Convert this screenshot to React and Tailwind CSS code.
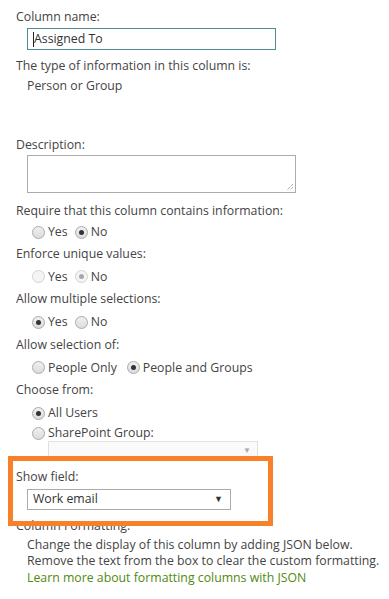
import React from 'react';

const Radio = ({ checked, disabled, label }) => (
  <span className="inline-flex items-center mr-[7px]">
    <span
      className={`w-[13px] h-[13px] rounded-full border flex items-center justify-center mr-[3px] ${
        disabled ? 'border-[#d4d4d4] bg-[#f4f4f4]' : 'border-[#a9a9a9] bg-gradient-to-b from-[#f0f0f0] to-[#dcdcdc]'
      }`}
    >
      {checked && (
        <span className={`w-[5px] h-[5px] rounded-full ${disabled ? 'bg-[#a8a8a8]' : 'bg-[#333]'}`} />
      )}
    </span>
    <span>{label}</span>
  </span>
);

// height passed in full so tailwind sees the class name
const Label = ({ children, h = 'h-[22.5px]', className = '' }) => (
  <div className={`${h} flex items-center whitespace-nowrap ${className}`}>{children}</div>
);

const RadioRow = ({ children, h = 'h-[22.5px]' }) => (
  <div className={`ml-[16px] ${h} flex items-center whitespace-nowrap`}>{children}</div>
);

const App = () => {
  return (
    <div
      className="w-[389px] h-[599px] bg-white text-[#444] text-[12.3px] overflow-hidden"
      style={{ fontFamily: '"Open Sans", "Noto Sans", sans-serif' }}
    >
      <div className="pl-[16px] pt-[6px]">
        <Label h="h-[22px]">Column name:</Label>
        <div className="ml-[11px] w-[249px] h-[22px] border border-[#4f8b93] flex items-center pl-[5px]">
          <span className="w-px h-[15px] bg-[#222]" />
          <span className="text-[#333]">Assigned To</span>
        </div>
        <Label h="h-[20px]" className="mt-[6px]">The type of information in this column is:</Label>
        <Label h="h-[20px]" className="ml-[11px]">Person or Group</Label>

        <Label h="h-[20px]" className="mt-[39px]">Description:</Label>
        <div className="relative ml-[11px] w-[269px] h-[38px] border border-[#ababab]">
          <svg className="absolute right-[1px] bottom-[1px]" width="9" height="9" viewBox="0 0 9 9">
            <path d="M8 2 L2 8 M8 5 L5 8" stroke="#888" strokeWidth="1" strokeDasharray="1 1" fill="none" />
          </svg>
        </div>

        <Label h="h-[22px]" className="mt-[7px]">Require that this column contains information:</Label>
        <RadioRow h="h-[21px]">
          <Radio label="Yes" />
          <Radio checked label="No" />
        </RadioRow>

        <Label>Enforce unique values:</Label>
        <RadioRow>
          <Radio disabled label="Yes" />
          <Radio disabled checked label="No" />
        </RadioRow>

        <Label h="h-[23px]">Allow multiple selections:</Label>
        <RadioRow>
          <Radio checked label="Yes" />
          <Radio label="No" />
        </RadioRow>

        <Label h="h-[23px]">Allow selection of:</Label>
        <RadioRow>
          <Radio label="People Only" />
          <span className="ml-[3px]" />
          <Radio checked label="People and Groups" />
        </RadioRow>

        <Label h="h-[23px]">Choose from:</Label>
        <RadioRow>
          <Radio checked label="All Users" />
        </RadioRow>
        <RadioRow h="h-[18px]">
          <Radio label="SharePoint Group:" />
        </RadioRow>
        <div className="ml-[32px] w-[210px] h-[18px] border border-[#e1e1e1] bg-[#fafafa] flex items-center justify-end pr-[6px] -mt-[2px]">
          <span className="text-[8px] text-[#aaa]">▼</span>
        </div>
      </div>

      <div className="relative pl-[16px] pt-[8px]">
        <div className="absolute left-[8px] -top-[3px] w-[265px] h-[70px] border-[5px] border-[#f7812b] pointer-events-none" />
        <Label h="h-[22px]">Show field:</Label>
        <div className="ml-[11px] w-[204px] h-[21px] border border-[#ababab] flex items-center justify-between pl-[5px] pr-[7px]">
          <span className="text-[#333]">Work email</span>
          <span className="text-[9px] text-[#333]">▼</span>
        </div>
        <Label h="h-[20px]" className="mt-[7px]">Column Formatting:</Label>
        <div className="ml-[11px] leading-[16.5px] whitespace-nowrap">
          <div>Change the display of this column by adding JSON below.</div>
          <div>Remove the text from the box to clear the custom formatting.</div>
          <div className="text-[#4f8a10]">Learn more about formatting columns with JSON</div>
        </div>
      </div>
    </div>
  );
};

export default App;
